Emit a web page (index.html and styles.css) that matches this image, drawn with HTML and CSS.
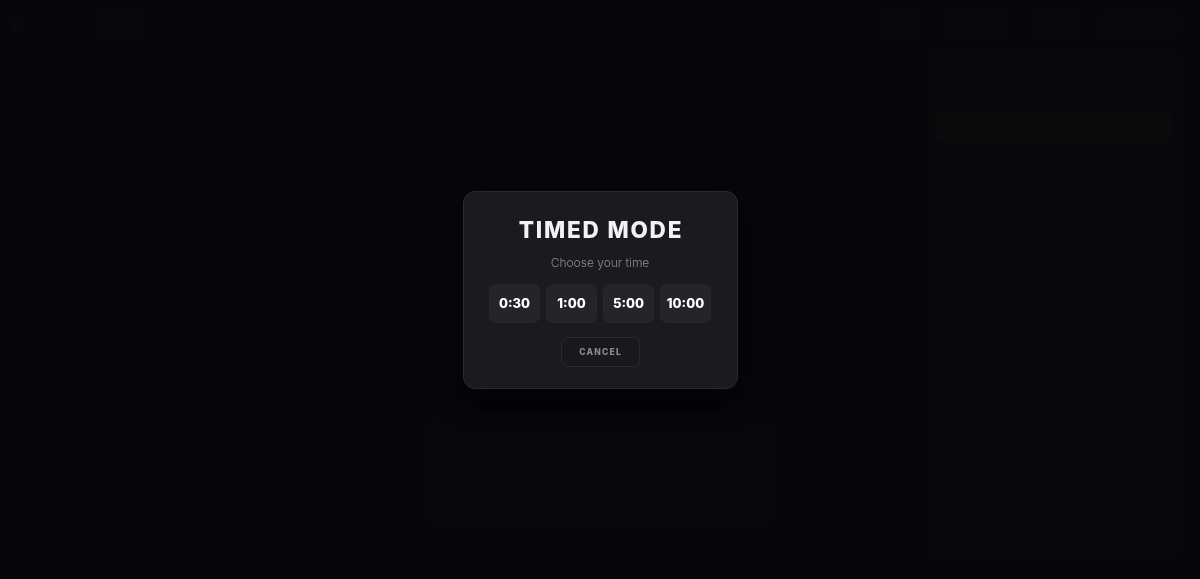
FILE: index.html
```html
<!DOCTYPE html>
<html lang="en">
<head>
<meta charset="utf-8">
<title>Timed Mode</title>
<link rel="stylesheet" href="styles.css">
</head>
<body>
<div class="app">
  <header class="topbar">
    <div class="brand">
      <span class="brand-mark"></span>
      <span class="brand-name"></span>
    </div>
    <nav class="nav">
      <span class="nav-item w1"></span>
      <span class="nav-item w2"></span>
      <span class="nav-item w3"></span>
      <span class="nav-item w4"></span>
    </nav>
  </header>
  <main class="layout">
    <div class="spacer"></div>
    <section class="stage">
      <div class="board-top"></div>
      <div class="board"></div>
    </section>
    <aside class="sidebar">
      <div class="side-line"></div>
      <div class="side-line short"></div>
      <div class="side-btn"></div>
    </aside>
  </main>
</div>

<div class="overlay">
  <div class="modal" role="dialog" aria-labelledby="modal-title">
    <h2 id="modal-title" class="modal-title">TIMED MODE</h2>
    <p class="modal-sub">Choose your time</p>
    <div class="time-grid">
      <button class="time-btn">0:30</button>
      <button class="time-btn">1:00</button>
      <button class="time-btn">5:00</button>
      <button class="time-btn">10:00</button>
    </div>
    <button class="cancel-btn">CANCEL</button>
  </div>
</div>
</body>
</html>
```

FILE: styles.css
```css
* { box-sizing: border-box; }

html, body {
  margin: 0;
  height: 100%;
}

body {
  background: #06060b;
  font-family: "Inter", "Noto Sans", sans-serif;
  color: #fff;
  overflow: hidden;
}

.app {
  height: 100%;
  display: flex;
  flex-direction: column;
}

.topbar {
  height: 50px;
  display: flex;
  align-items: center;
  justify-content: space-between;
  padding: 0 22px 0 10px;
}

.brand {
  display: flex;
  align-items: center;
  gap: 72px;
}

.brand-mark {
  width: 14px;
  height: 14px;
  border-radius: 3px;
  background: #08080d;
}

.brand-name {
  width: 48px;
  height: 20px;
  background: #07070c;
  border-radius: 3px;
}

.nav {
  display: flex;
  gap: 26px;
  align-items: center;
}

.nav-item {
  height: 28px;
  border-radius: 6px;
  background: #07070c;
}
.nav-item.w1 { width: 36px; }
.nav-item.w2 { width: 60px; }
.nav-item.w3 { width: 44px; }
.nav-item.w4 { width: 76px; }

.layout {
  flex: 1;
  display: grid;
  grid-template-columns: 1fr 338px 1fr;
  padding: 0 22px 20px 22px;
}

.stage {
  display: flex;
  flex-direction: column;
  align-items: center;
  justify-content: flex-end;
  gap: 7px;
  padding-bottom: 31px;
}

.board-top {
  width: 238px;
  height: 13px;
  background: #040408;
}

.board {
  width: 338px;
  height: 108px;
  border-radius: 6px;
  background: #07070c;
}

.sidebar {
  justify-self: end;
  width: 248px;
  display: flex;
  flex-direction: column;
  gap: 14px;
  padding: 12px 5px;
  border-radius: 8px;
  background: #07070c;
}

.side-line {
  height: 8px;
  width: 66%;
  background: #08080d;
  border-radius: 3px;
}
.side-line.short { width: 36%; }

.side-btn {
  height: 30px;
  margin-top: 6px;
  border-radius: 6px;
  background: #0a0a0a;
}

.overlay {
  position: fixed;
  inset: 0;
  display: flex;
  align-items: center;
  justify-content: center;
}

.modal {
  width: 275px;
  padding: 24px 26px 21px;
  background: #1a1a1f;
  border: 1px solid #2a2a30;
  border-radius: 12px;
  display: flex;
  flex-direction: column;
  align-items: center;
  box-shadow: 0 10px 30px rgba(0, 0, 0, 0.5);
}

.modal-title {
  margin: 0 -2px 0 0;
  font-size: 22.5px;
  line-height: 28px;
  font-weight: 800;
  letter-spacing: 1.8px;
  color: #f2f2f4;
}

.modal-sub {
  margin: 11px 0 0;
  font-size: 12px;
  line-height: 16px;
  font-weight: 300;
  color: #8c8c92;
}

.time-grid {
  margin-top: 13px;
  display: flex;
  gap: 6px;
}

.time-btn {
  width: 51px;
  height: 39px;
  border: 1px solid #26262c;
  border-radius: 7px;
  background: #24242a;
  color: #fff;
  font-family: inherit;
  font-size: 13px;
  font-weight: 800;
  padding: 0;
}

.cancel-btn {
  margin-top: 14px;
  width: 79px;
  height: 30px;
  border: 1px solid #2b2b31;
  border-radius: 7px;
  background: #18181d;
  color: #8c8c92;
  font-family: inherit;
  font-size: 8.5px;
  font-weight: 800;
  letter-spacing: 1.2px;
  padding: 0 0 0 1.2px;
}
```
